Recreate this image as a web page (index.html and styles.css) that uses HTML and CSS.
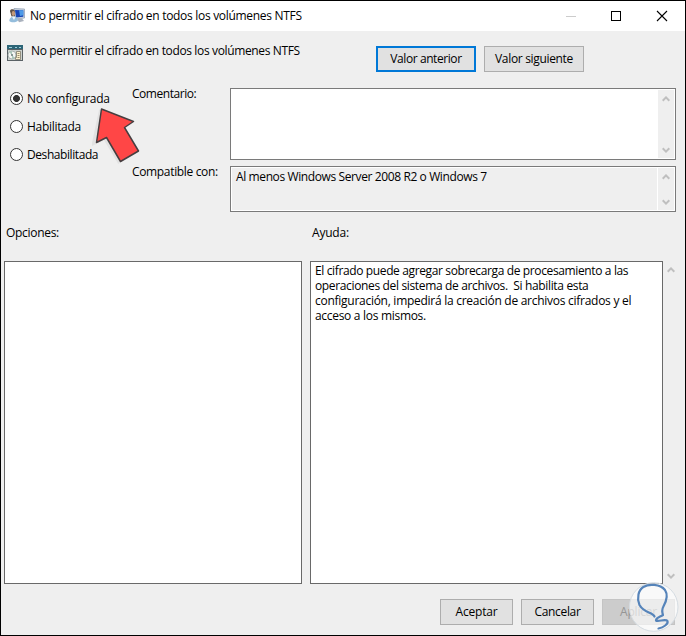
FILE: index.html
```html
<!DOCTYPE html>
<html lang="es">
<head>
<meta charset="utf-8">
<title>No permitir el cifrado en todos los volúmenes NTFS</title>
<link rel="stylesheet" href="styles.css">
</head>
<body>
<div class="window">
  <header class="titlebar">
    <svg class="app-icon" width="16" height="16" viewBox="0 0 16 16">
      <path d="M5 .5 15.500 1v9L6 11z" fill="#c9d3df" stroke="#8d9bb0" stroke-width=".7"/>
      <path d="M6 2l8.300.2v6.600L7 9.500z" fill="#1746b5"/>
      <path d="M10 2.200h4.300v5L11 8z" fill="#4e9be8"/>
      <path d="M8 11l5-.6 2 2.600-5 1.200z" fill="#a9b1bd"/>
      <path d="M1 3c0-2 4-2.500 5 0v5L2.500 8.500z" fill="#5d5147"/>
      <ellipse cx="4.400" cy="5.500" rx="1.700" ry="2.400" fill="#c49a79"/>
      <path d="M.3 13c0-3 2-4.500 4.500-4.500S9 10 9 12.500c-1 2-7 2.500-8.700.5z" fill="#94bddc"/>
      <path d="M3 9l2 3 1.500-3z" fill="#eef6fb"/>
    </svg>
    <span class="title">No permitir el cifrado en todos los volúmenes NTFS</span>
    <svg class="controls" width="102" height="12" viewBox="0 0 102 12" fill="none">
      <path d="M0 6.500h10" stroke="#ccc"/>
      <rect x="45.500" y="1.500" width="9" height="9" stroke="#000"/>
      <path d="M91 1l10 10M101 1 91 11" stroke="#000" stroke-width="1.100"/>
    </svg>
  </header>

  <section class="heading">
    <svg class="policy-icon" width="16" height="16" viewBox="0 0 16 16">
      <path d="M0 0h16v16H0z" fill="#5a6266"/>
      <path d="M0 0h16v4H0z" fill="#2d6577"/>
      <path d="M2 2h3v1H2zM8 2h2v1H8zM12 2h2v1h-2z" fill="#9fd0dc"/>
      <path d="M1 5h14v10H1z" fill="#cdd3d0"/>
      <circle cx="5" cy="10" r="4" fill="#f3f5f2" stroke="#98a5a3" stroke-width=".8"/>
      <path d="M5 10 2 7l3-1zM5 10l3 3-3 1z" fill="#a9c6ba"/>
      <circle cx="5" cy="10" r="1" fill="#6b7b7a"/>
      <path d="M9.500 6.500h4v8h-5v-2h1z" fill="#fbf0cd" stroke="#7d7869" stroke-width=".8"/>
      <path d="M10.500 8.500h2M10.500 10.500h2M10.500 12.500h2" stroke="#8f8263" stroke-width=".9"/>
    </svg>
    <span class="policy">No permitir el cifrado en todos los volúmenes NTFS</span>
    <button class="btn primary">Valor anterior</button>
    <button class="btn nav">Valor siguiente</button>
  </section>

  <section class="settings">
    <div class="states">
      <label class="state"><i class="radio on"></i><span class="s1">No configurada</span></label>
      <label class="state"><i class="radio"></i><span class="s2">Habilitada</span></label>
      <label class="state"><i class="radio"></i><span class="s3">Deshabilitada</span></label>
      <svg class="pointer" width="50" height="64" viewBox="0 0 50 64">
        <path d="M9 7 2 40l11-5 15 25" fill="none" stroke="#000" stroke-opacity=".05" stroke-width="4"/>
        <path d="M9.500 6 41.500 18.500 32.500 24.500 46.500 48 28.500 58.500 14.500 34.500 4.500 39.500z" fill="#ff4646" stroke="#463e40" stroke-width="1.500" stroke-linejoin="round"/>
      </svg>
    </div>
    <div class="names">
      <span class="n1">Comentario:</span>
      <span class="n2">Compatible con:</span>
    </div>
    <div class="fields">
      <div class="field comment">
        <div class="value"></div>
        <div class="scroll"><svg width="8" height="6" viewBox="0 0 8 6"><path d="M.7 4.700 4 1.400l3.300 3.300"/></svg><svg width="8" height="6" viewBox="0 0 8 6"><path d="M.7 1.300 4 4.600l3.300-3.300"/></svg></div>
      </div>
      <div class="field support">
        <div class="value"><span class="os">Al menos Windows Server 2008 R2 o Windows 7</span></div>
        <div class="scroll"><svg width="8" height="6" viewBox="0 0 8 6"><path d="M.7 4.700 4 1.400l3.300 3.300"/></svg><svg width="8" height="6" viewBox="0 0 8 6"><path d="M.7 1.300 4 4.600l3.300-3.300"/></svg></div>
      </div>
    </div>
  </section>

  <section class="captions"><span class="c1">Opciones:</span><span class="c2">Ayuda:</span></section>

  <section class="panels">
    <div class="panel options"></div>
    <div class="panel help">
      <div class="h1">El cifrado puede agregar sobrecarga de procesamiento a las</div>
      <div class="h2">operaciones del sistema de archivos.&nbsp; Si habilita esta</div>
      <div class="h3">configuración, impedirá la creación de archivos cifrados y el</div>
      <div class="h4">acceso a los mismos.</div>
    </div>
    <div class="scroll outer"><svg width="8" height="6" viewBox="0 0 8 6"><path d="M.7 4.700 4 1.400l3.300 3.300"/></svg><svg width="8" height="6" viewBox="0 0 8 6"><path d="M.7 1.300 4 4.600l3.300-3.300"/></svg></div>
  </section>

  <footer class="actions">
    <button class="btn">Aceptar</button>
    <button class="btn cancel">Cancelar</button>
    <button class="btn disabled">Aplicar</button>
  </footer>
  <svg class="watermark" width="52" height="52" viewBox="0 0 52 52">
    <circle cx="25.700" cy="26" r="24.300" fill="#fff" fill-opacity=".62" stroke="#d5dce2" stroke-width="1"/>
    <path d="M26.500 35.500C25 31.500 16 32 11.500 24 8.500 17 10.500 9 15.300 6 21 2.500 32 3 37 9c4 6 1 12-1.700 16.700C33.500 29 34 31 35 34c-3 2-7 2.500-7 5.500 2 1.500 10-2 11.500.5 1 3-4 6.500-9 7.500" fill="none" stroke="#5684ba" stroke-width="2.200" stroke-linecap="round" stroke-linejoin="round"/>
  </svg>
</div>
</body>
</html>
```
FILE: styles.css
```css
* { box-sizing: border-box; }

body {
  margin: 0;
  font: 12px/15px "Open Sans", "Noto Sans", sans-serif;
  letter-spacing: -0.3px;
  color: #000;
}

.window {
  position: relative;
  display: flex;
  flex-direction: column;
  width: 686px;
  height: 636px;
  border: 1px solid #000;
  background: #efefef;
  white-space: nowrap;
}

svg { display: block; flex: none; }

.titlebar {
  display: flex;
  align-items: center;
  height: 30px;
  padding: 0 17px 0 8px;
  background: #fff;
}
.title { margin: 0 0 1px 5px; }
.controls { margin-left: auto; }

.heading {
  display: flex;
  align-items: flex-start;
  height: 57px;
  padding: 15px 0 0 6px;
}
.policy-icon { margin-top: -1px; }
.policy { width: 345px; margin: -3px 0 0 8px; letter-spacing: -0.36px; }

.btn {
  width: 73px;
  height: 26px;
  padding: 0 0 1px;
  border: 1px solid #adadad;
  background: #e1e1e1;
  color: #000;
  font: inherit;
  letter-spacing: -0.2px;
}
.btn.nav { width: 100px; margin-left: 8px; letter-spacing: -0.33px; }
.btn.primary { width: 100px; border: 2px solid #0078d7; letter-spacing: -0.42px; }
.btn.cancel { letter-spacing: -0.35px; }
.btn.disabled { border-color: #c4c4c4; background: #ccc; color: #959595; }

.settings { display: flex; height: 135px; }
.states {
  position: relative;
  width: 131px;
  padding: 3px 0 0 9px;
}
.state { display: flex; align-items: center; height: 15px; margin-bottom: 13px; }
.s1 { letter-spacing: -0.25px; }
.s3 { letter-spacing: -0.42px; }
.radio {
  width: 13px;
  height: 13px;
  margin-right: 4px;
  border: 1px solid #333;
  border-radius: 50%;
  background: #fff;
}
.radio.on { background: radial-gradient(circle, #333 3.1px, #fff 3.8px); }
.pointer { position: absolute; left: 91px; top: 15px; }

.names { width: 98px; }
.names span { display: block; height: 78px; }
.names .n1 { margin-top: -2px; letter-spacing: -0.46px; }
.names .n2 { letter-spacing: -0.34px; }

.fields { display: flex; flex-direction: column; gap: 6px; width: 446px; }
.field {
  display: flex;
  padding: 1px;
  border: 1px solid #7a7a7a;
  background: #fff;
}
.comment { height: 72px; }
.support { height: 46px; }
.value { flex: 1; margin-right: 1px; padding: 1px 0 0 4px; }
.support .value { background: #efefef; }
.os { letter-spacing: -0.39px; }
.scroll {
  display: flex;
  flex-direction: column;
  justify-content: space-between;
  align-items: center;
  width: 16px;
  padding: 6px 0 5px;
  background: #efefef;
}
.scroll path { fill: none; stroke: #bfbfbf; stroke-width: 2; }

.captions { display: flex; height: 38px; padding: 2px 0 0 5px; }
.c1 { width: 306px; }
.c2 { letter-spacing: -0.2px; }

.panels { display: flex; height: 323px; padding-left: 3px; }
.panel { border: 1px solid #696969; background: #fff; }
.options { width: 298px; margin-right: 8px; }
.help { width: 353px; padding: 1px 4px; }
.h1 { letter-spacing: -0.37px; }
.h2 { letter-spacing: -0.35px; }
.h3 { letter-spacing: -0.27px; }
.h4 { letter-spacing: -0.3px; }

.actions { display: flex; gap: 8px; padding: 15px 0 0 439px; }

.watermark { position: absolute; left: 627px; top: 580px; }
```
